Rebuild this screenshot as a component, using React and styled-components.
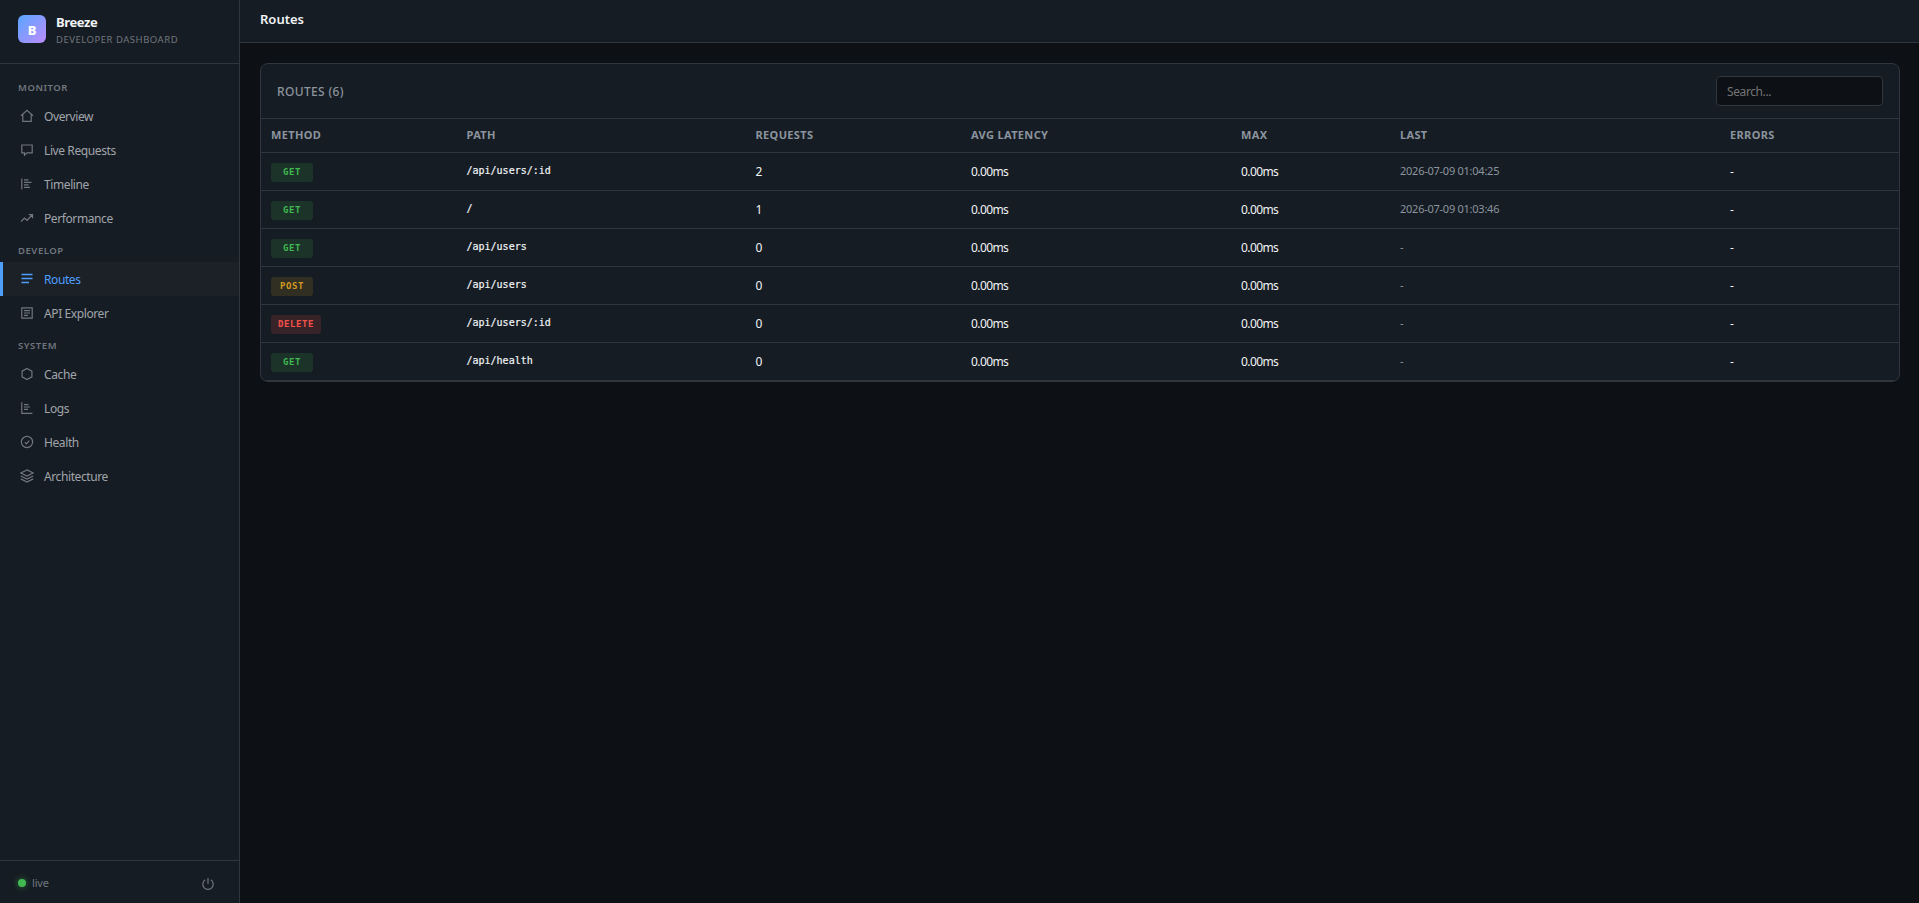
import React from 'react'
import styled, { createGlobalStyle, css } from 'styled-components'

const bg = '#0d1014'
const panel = '#161c23'
const line = '#30363d'
const text = '#f0f3f6'
const textDim = '#a0a5ab'
const textMuted = '#70767e'
const accent = '#4d9fff'

const sans = `'Noto Sans', 'Open Sans', sans-serif`
const mono = `'DejaVu Sans Mono', monospace`

const GlobalStyle = createGlobalStyle`
	* {
		box-sizing: border-box;
	}
	body {
		margin: 0;
		background: ${ bg };
		color: ${ text };
		font-family: ${ sans };
		font-size: 12px;
		overflow: hidden;
	}
`

const Layout = styled.div`
	display: flex;
	height: 100vh;
`

const Sidebar = styled.aside`
	display: flex;
	flex-direction: column;
	width: 240px;
	flex-shrink: 0;
	background: ${ panel };
	border-right: 1px solid ${ line };
`

const Brand = styled.div`
	display: flex;
	align-items: flex-start;
	height: 64px;
	padding: 15px 18px 0;
	gap: 10px;
	border-bottom: 1px solid ${ line };
`

const Logo = styled.div`
	width: 28px;
	height: 28px;
	border-radius: 6px;
	background: linear-gradient(135deg, #58a6ff, #bc8cff);
	color: #ffffff;
	font-size: 13px;
	font-weight: 800;
	line-height: 30px;
	text-align: center;
`

const BrandName = styled.div`
	font-size: 13px;
	font-weight: 700;
	line-height: 14px;
	letter-spacing: -0.4px;
`

const BrandSub = styled.div`
	font-size: 9.5px;
	line-height: 22px;
	letter-spacing: 0.52px;
	color: ${ textMuted };
`

const Nav = styled.nav`
	flex: 1;
	padding-top: 8px;
`

const NavLabel = styled.div`
	height: 27px;
	padding-left: 18px;
	font-size: 9.5px;
	font-weight: 600;
	line-height: 32px;
	letter-spacing: 0.55px;
	color: ${ textMuted };
`

const NavItem = styled.a`
	display: flex;
	align-items: center;
	height: 34px;
	padding-left: 17px;
	gap: 10px;
	border-left: 3px solid transparent;
	font-size: 12px;
	letter-spacing: -0.4px;
	color: ${ textDim };
	> svg {
		color: ${ textMuted };
	}
	${ props => props.$active && css`
		border-left-color: ${ accent };
		background: #1c2128;
		color: ${ accent };
		> svg {
			color: ${ accent };
		}
	` }
`

const SidebarFooter = styled.div`
	display: flex;
	align-items: center;
	height: 43px;
	padding: 2px 24px 0 18px;
	border-top: 1px solid ${ line };
	font-size: 11px;
	line-height: 16px;
	letter-spacing: -0.2px;
	color: ${ textMuted };
	> svg {
		margin-left: auto;
		margin-top: 2px;
	}
`

const LiveDot = styled.span`
	width: 8px;
	height: 8px;
	margin-right: 6px;
	border-radius: 50%;
	background: #3fb950;
	box-shadow: 0 0 6px rgba(63, 185, 80, 0.6);
`

const Main = styled.main`
	flex: 1;
	min-width: 0;
`

const Topbar = styled.header`
	height: 43px;
	padding-left: 20px;
	background: ${ panel };
	border-bottom: 1px solid ${ line };
	font-size: 13px;
	font-weight: 600;
	line-height: 38px;
	letter-spacing: 0;
`

const Card = styled.section`
	margin: 20px 19px 0 20px;
	border: 1px solid ${ line };
	border-radius: 8px;
	background: ${ panel };
	overflow: hidden;
`

const CardHeader = styled.div`
	display: flex;
	align-items: center;
	justify-content: space-between;
	height: 55px;
	padding: 0 16px;
	border-bottom: 1px solid ${ line };
`

const CardTitle = styled.h2`
	margin: 0;
	font-size: 12px;
	font-weight: 500;
	letter-spacing: 0.35px;
	color: #8b949e;
`

const Search = styled.input`
	width: 167px;
	height: 30px;
	padding: 0 10px;
	border: 1px solid ${ line };
	border-radius: 4px;
	background: ${ bg };
	font-family: ${ sans };
	font-size: 12px;
	letter-spacing: -0.4px;
	&::placeholder {
		color: #757575;
	}
`

const Row = styled.div`
	display: grid;
	grid-template-columns: 195.5px 289px 215.5px 270px 159px 330px 1fr;
	align-items: center;
	height: 38px;
	border-bottom: 1px solid ${ line };
	> * {
		margin-left: 10px;
		justify-self: start;
	}
`

const HeadRow = styled( Row )`
	height: 34px;
	padding-bottom: 2px;
	font-size: 11px;
	font-weight: 700;
	letter-spacing: 0.35px;
	color: #8b949e;
`

const methodColors = {
	GET: css`
		color: #3fb950;
		background: rgba(63, 185, 80, 0.15);
	`,
	POST: css`
		color: #d29922;
		background: rgba(210, 153, 34, 0.15);
	`,
	DELETE: css`
		color: #f85149;
		background: rgba(248, 81, 73, 0.15);
	`
}

const Method = styled.span`
	min-width: 42px;
	height: 19px;
	margin-top: 1px;
	padding: 0 7px;
	border-radius: 3px;
	font-family: ${ mono };
	font-size: 9px;
	font-weight: 700;
	line-height: 18px;
	letter-spacing: 0.6px;
	text-align: center;
	${ props => methodColors[ props.$method ] }
`

const Path = styled.span`
	margin-top: -3px;
	font-family: ${ mono };
	font-size: 10px;
	-webkit-text-stroke: 0.2px currentColor;
`

const Value = styled.span`
	font-size: 12px;
	letter-spacing: -0.6px;
`

const Time = styled.span`
	margin-top: -2px;
	font-size: 11px;
	letter-spacing: -0.25px;
	color: #8b949e;
`

const Icon = ( { children, size = 14 } ) => (
	<svg
		width={ size }
		height={ size }
		viewBox="0 0 14 14"
		fill="none"
		stroke="currentColor"
		strokeWidth="1.2"
	>
		{ children }
	</svg>
)

const icons = {
	home: <path d="M1 6.8 7 1.3l6 5.5M2.8 5.5v6.8h8.4V5.5" />,
	chat: <path d="M1.8 2h10.4v7.8H7l-2.5 2.3V9.8H1.8z" />,
	timeline: <path d="M1.8 1.5v11M4 2.9h4.5M4 5.4h7.5M4 7.9h4.5M4 10.4h6" />,
	trend: <path d="M1 10.5 4.5 7 7 9.3l5-5.3M8.8 3.6h3.7v3.7" />,
	list: <path strokeWidth="1.3" d="M1.5 2.5h11M1.5 6.5h11M1.5 10.5h7.5" />,
	doc: <path d="M1.8 1.8h10.4v10.4H1.8zM4 4.6h6M4 7h6M4 9.4h4" />,
	hexagon: <path d="M7 1.4 11.9 4.2v5.6L7 12.6 2.1 9.8V4.2z" />,
	logs: <path d="M1.8 1.3v11h10.6M4 3.6h4.5M4 6h6M4 8.4h4" />,
	check: <path d="M7 1.4a5.6 5.6 0 1 0 0 11.2A5.6 5.6 0 0 0 7 1.4zM4.8 7.2l1.6 1.6 2.9-3.2" />,
	layers: <path d="M7 .9 13.2 4 7 7.1.8 4zM.8 7 7 10.1 13.2 7M.8 9.9 7 13l6.2-3.1" />,
	power: <path d="M7 1v6M4.3 2.7a5.2 5.2 0 1 0 5.4 0" />
}

const menu = [
	{
		label: 'MONITOR',
		items: [
			[ 'Overview', 'home' ],
			[ 'Live Requests', 'chat' ],
			[ 'Timeline', 'timeline' ],
			[ 'Performance', 'trend' ]
		]
	},
	{
		label: 'DEVELOP',
		items: [
			[ 'Routes', 'list' ],
			[ 'API Explorer', 'doc' ]
		]
	},
	{
		label: 'SYSTEM',
		items: [
			[ 'Cache', 'hexagon' ],
			[ 'Logs', 'logs' ],
			[ 'Health', 'check' ],
			[ 'Architecture', 'layers' ]
		]
	}
]

const columns = [ 'METHOD', 'PATH', 'REQUESTS', 'AVG LATENCY', 'MAX', 'LAST', 'ERRORS' ]

const routes = [
	{ method: 'GET', path: '/api/users/:id', requests: 2, last: '2026-07-09 01:04:25' },
	{ method: 'GET', path: '/', requests: 1, last: '2026-07-09 01:03:46' },
	{ method: 'GET', path: '/api/users', requests: 0, last: '-' },
	{ method: 'POST', path: '/api/users', requests: 0, last: '-' },
	{ method: 'DELETE', path: '/api/users/:id', requests: 0, last: '-' },
	{ method: 'GET', path: '/api/health', requests: 0, last: '-' }
]

export default () => (
	<Layout>
		<GlobalStyle />
		<Sidebar>
			<Brand>
				<Logo>B</Logo>
				<div>
					<BrandName>Breeze</BrandName>
					<BrandSub>DEVELOPER DASHBOARD</BrandSub>
				</div>
			</Brand>
			<Nav>
				{
					menu.map( group => (
						<div key={ group.label }>
							<NavLabel>{ group.label }</NavLabel>
							{
								group.items.map( ( [ name, icon ] ) => (
									<NavItem key={ name } $active={ name === 'Routes' }>
										<Icon>{ icons[ icon ] }</Icon>
										{ name }
									</NavItem>
								) )
							}
						</div>
					) )
				}
			</Nav>
			<SidebarFooter>
				<LiveDot />
				live
				<Icon>{ icons.power }</Icon>
			</SidebarFooter>
		</Sidebar>
		<Main>
			<Topbar>Routes</Topbar>
			<Card>
				<CardHeader>
					<CardTitle>ROUTES ({ routes.length })</CardTitle>
					<Search placeholder="Search..." />
				</CardHeader>
				<HeadRow>
					{ columns.map( name => <span key={ name }>{ name }</span> ) }
				</HeadRow>
				{
					routes.map( ( route, key ) => (
						<Row key={ key }>
							<Method $method={ route.method }>{ route.method }</Method>
							<Path>{ route.path }</Path>
							<Value>{ route.requests }</Value>
							<Value>0.00ms</Value>
							<Value>0.00ms</Value>
							<Time>{ route.last }</Time>
							<Value>-</Value>
						</Row>
					) )
				}
			</Card>
		</Main>
	</Layout>
)
